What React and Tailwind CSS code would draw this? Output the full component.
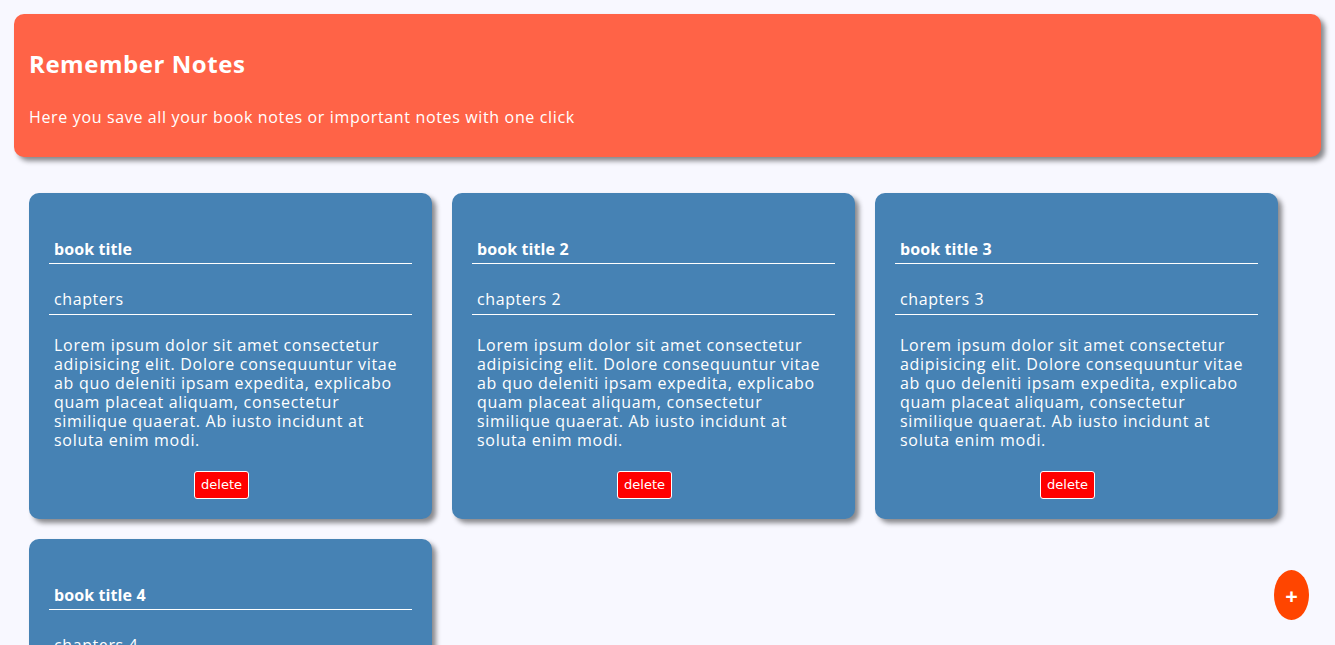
import { useState } from 'react'

const initialNotes = [
  { id: 1, title: 'book title', chapter: 'chapters' },
  { id: 2, title: 'book title 2', chapter: 'chapters 2' },
  { id: 3, title: 'book title 3', chapter: 'chapters 3' },
  { id: 4, title: 'book title 4', chapter: 'chapters 4' },
]

const lorem =
  'Lorem ipsum dolor sit amet consectetur adipisicing elit. Dolore consequuntur vitae ab quo deleniti ipsam expedita, explicabo quam placeat aliquam, consectetur similique quaerat. Ab iusto incidunt at soluta enim modi.'

function NoteCard({ note, onDelete }) {
  return (
    <div className="w-[403px] rounded-[10px] bg-[#4682b4] p-5 text-white shadow-[4px_4px_5px_rgba(0,0,0,0.45)]">
      <div className="mt-[26px] border-b border-white px-[5px] pb-[4px] text-[16px] font-bold leading-[20px] tracking-[0.1px]">
        {note.title}
      </div>
      <div className="mt-[25px] border-b border-white px-[5px] pb-[5px] text-[16px] leading-[20px] tracking-[0.6px]">
        {note.chapter}
      </div>
      <p className="mt-[21px] px-[5px] text-[16px] leading-[19px] tracking-[0.7px]">{lorem}</p>
      <div className="mt-[21px] flex">
        <button
          onClick={() => onDelete(note.id)}
          className="ml-[145px] h-[28px] w-[55px] rounded-[3px] border border-white bg-[#ff0000] font-['DejaVu_Sans',sans-serif] text-[13px] tracking-normal text-white"
        >
          delete
        </button>
      </div>
    </div>
  )
}

export default function App() {
  const [notes, setNotes] = useState(initialNotes)

  const addNote = () => {
    const n = notes.length + 1
    setNotes([...notes, { id: Date.now(), title: `book title ${n}`, chapter: `chapters ${n}` }])
  }

  return (
    <div className="min-h-screen bg-[#f8f8ff] pt-[14px] font-['Open_Sans',sans-serif]">
      <header className="mx-[14px] h-[143px] rounded-[10px] bg-[#ff6347] px-[15px] pt-[35px] text-white shadow-[4px_4px_5px_rgba(0,0,0,0.45)]">
        <h1 className="text-[24px] font-bold leading-[29px] tracking-[0.55px]">Remember Notes</h1>
        <p className="mt-[29px] text-[16px] leading-[20px] tracking-[0.65px]">
          Here you save all your book notes or important notes with one click
        </p>
      </header>

      <main className="flex flex-wrap gap-5 px-[29px] pt-[36px] pb-10">
        {notes.map(note => (
          <NoteCard key={note.id} note={note} onDelete={id => setNotes(notes.filter(x => x.id !== id))} />
        ))}
      </main>

      <button
        onClick={addNote}
        className="fixed right-[26px] bottom-[25px] flex h-[50px] w-[35px] items-center justify-center rounded-[50%] bg-[#ff4500] text-[22px] font-bold text-white"
      >
        +
      </button>
    </div>
  )
}
